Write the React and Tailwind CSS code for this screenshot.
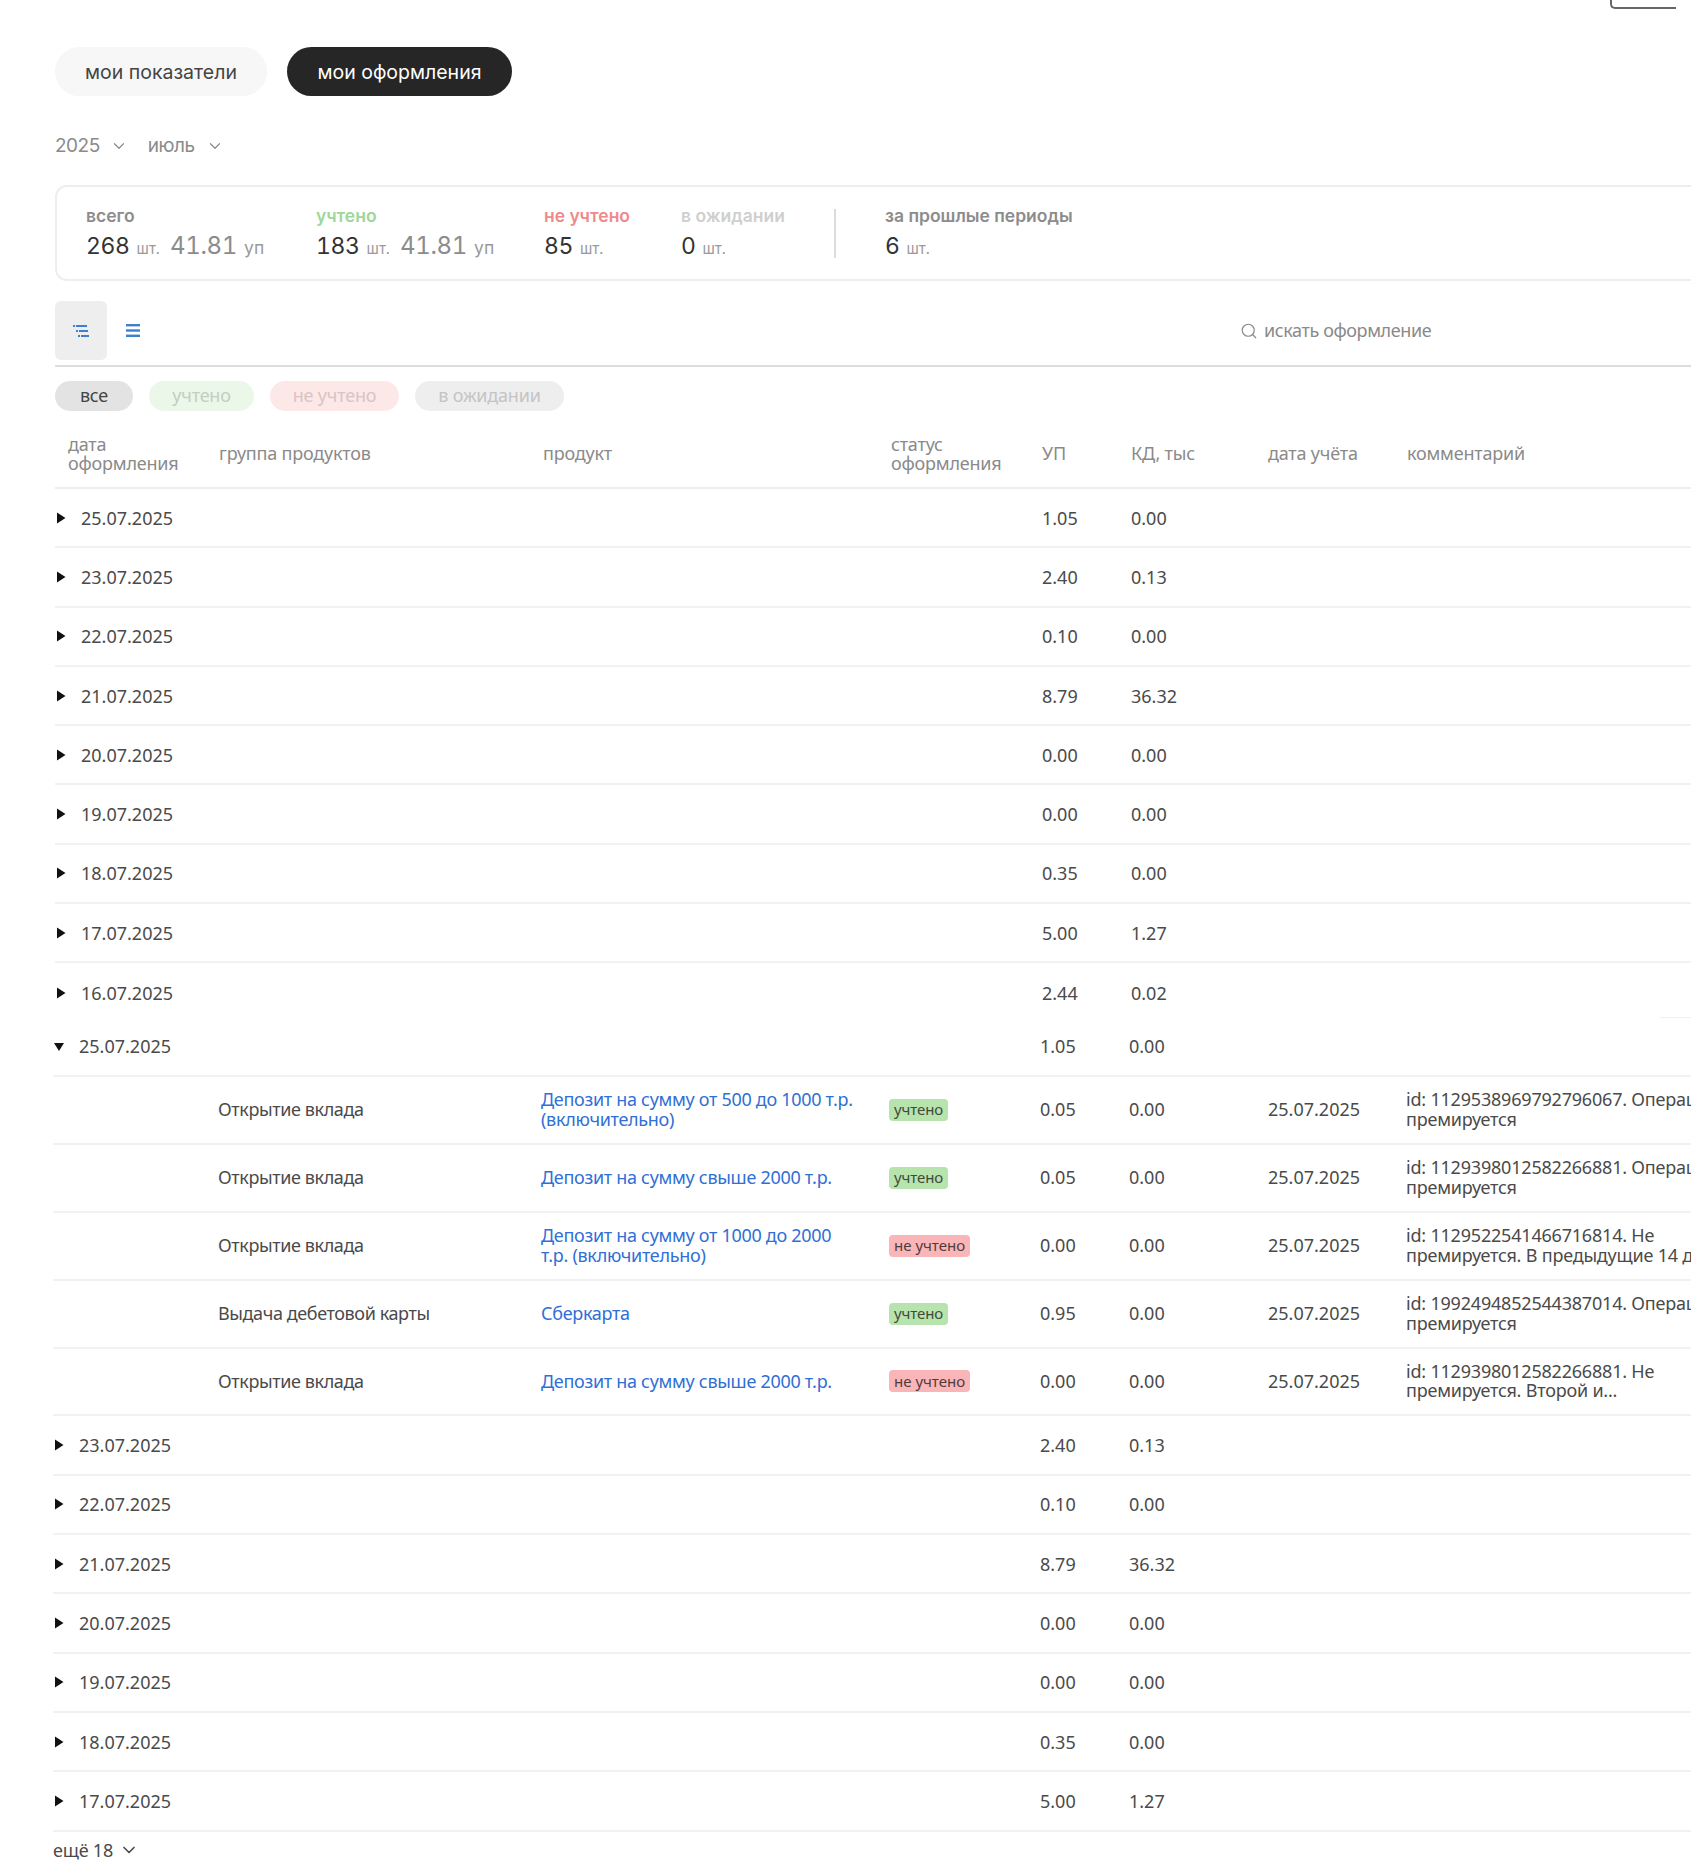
import { Search, ChevronDown } from 'lucide-react'

const top = [
  ['25.07.2025', '1.05', '0.00'],
  ['23.07.2025', '2.40', '0.13'],
  ['22.07.2025', '0.10', '0.00'],
  ['21.07.2025', '8.79', '36.32'],
  ['20.07.2025', '0.00', '0.00'],
  ['19.07.2025', '0.00', '0.00'],
  ['18.07.2025', '0.35', '0.00'],
  ['17.07.2025', '5.00', '1.27'],
  ['16.07.2025', '2.44', '0.02'],
]

const details = [
  {
    group: 'Открытие вклада',
    product: ['Депозит на сумму от 500 до 1000 т.р.', '(включительно)'],
    ok: true,
    up: '0.05',
    comment: ['id: 1129538969792796067. Операция не', 'премируется'],
  },
  {
    group: 'Открытие вклада',
    product: ['Депозит на сумму свыше 2000 т.р.'],
    ok: true,
    up: '0.05',
    comment: ['id: 1129398012582266881. Операция не', 'премируется'],
  },
  {
    group: 'Открытие вклада',
    product: ['Депозит на сумму от 1000 до 2000', 'т.р. (включительно)'],
    ok: false,
    up: '0.00',
    comment: ['id: 1129522541466716814. Не', 'премируется. В предыдущие 14 дней'],
  },
  {
    group: 'Выдача дебетовой карты',
    product: ['Сберкарта'],
    ok: true,
    up: '0.95',
    comment: ['id: 1992494852544387014. Операция не', 'премируется'],
  },
  {
    group: 'Открытие вклада',
    product: ['Депозит на сумму свыше 2000 т.р.'],
    ok: false,
    up: '0.00',
    comment: ['id: 1129398012582266881. Не', 'премируется. Второй и...'],
  },
]

const cols = 'grid grid-cols-[164px_324px_348px_151px_89px_137px_139px_1fr] items-center'

function Caret({ open }) {
  return (
    <svg width="10" height="12" viewBox="0 0 10 12" className="absolute left-[1px] top-1/2 -translate-y-1/2" fill="#111">
      {open ? <path d="M0 3h10L5 11z" /> : <path d="M1 0.5l8.5 5.5L1 11.5z" />}
    </svg>
  )
}

function DateRow({ row, open, last }) {
  return (
    <div className={`${cols} relative h-[59.3px] text-[18px] leading-[20px] text-[#4a4a4a] ${last ? '' : 'border-b-2 border-[#f2f2f2]'}`}>
      <div className="relative pl-[26px]">
        <Caret open={open} />
        {row[0]}
      </div>
      <div />
      <div />
      <div />
      <div>{row[1]}</div>
      <div>{row[2]}</div>
      {last && <div className="absolute bottom-[5px] right-0 h-[1px] w-[31px] bg-[#f0f0f0]" />}
    </div>
  )
}

function DetailRow({ item }) {
  return (
    <div className={`${cols} h-[67.9px] overflow-hidden border-b-2 border-[#f2f2f2] text-[18px] leading-[19.6px] text-[#4a4a4a]`}>
      <div />
      <div className="pl-[1px] tracking-[-0.4px]">{item.group}</div>
      <div className="tracking-[-0.3px] text-[#2f6fd6]">
        {item.product.map((line) => (
          <div key={line}>{line}</div>
        ))}
      </div>
      <div>
        {item.ok ? (
          <span className="inline-flex h-[22px] items-center rounded-[4px] bg-[#b7e3ac] px-[5px] text-[15px] tracking-[-0.1px] text-[#3f4a3d]">учтено</span>
        ) : (
          <span className="inline-flex h-[22px] items-center rounded-[4px] bg-[#f9b5b7] px-[5px] text-[15px] text-[#4f3c3c]">не учтено</span>
        )}
      </div>
      <div>{item.up}</div>
      <div>0.00</div>
      <div className="pl-[2px]">25.07.2025</div>
      <div className="whitespace-nowrap pl-[1px] tracking-[-0.2px]">
        {item.comment.map((line) => (
          <div key={line}>{line}</div>
        ))}
      </div>
    </div>
  )
}

function Stat({ label, labelClass, width, count, up }) {
  return (
    <div className={`${width} shrink-0`}>
      <div className={`text-[17.5px] leading-[22px] font-semibold ${labelClass}`}>{label}</div>
      <div className="mt-[3px] flex items-baseline whitespace-nowrap leading-[32px] tabular-nums">
        <span className="text-[23px] tracking-[-0.4px] text-[#333]">{count}</span>
        <span className="ml-[7px] text-[15px] text-[#9a9a9a]">шт.</span>
        {up && (
          <>
            <span className="ml-[10px] text-[24px] tracking-[-0.3px] text-[#8c8c8c]">{up}</span>
            <span className="ml-[7px] text-[17.5px] text-[#9a9a9a]">уп</span>
          </>
        )}
      </div>
    </div>
  )
}

function Headers() {
  return (
    <div className={`${cols} h-[78px] border-b-2 border-[#eeeeee] pt-[10px] text-[18px] leading-[19.5px] tracking-[-0.2px] text-[#8a8a8a]`}>
      <div className="pl-[13px]">
        дата
        <br />
        оформления
      </div>
      <div>группа продуктов</div>
      <div>продукт</div>
      <div>
        статус
        <br />
        оформления
      </div>
      <div>УП</div>
      <div>КД, тыс</div>
      <div>дата учёта</div>
      <div>комментарий</div>
    </div>
  )
}

export default function App() {
  return (
    <div className="h-[1868px] w-[1691px] overflow-hidden bg-white font-['Noto_Sans',sans-serif]">
      <div className="flex h-[9px] justify-end pr-[15px]">
        <div className="w-[66px] rounded-bl-[5px] border-b-2 border-l-2 border-[#666]" />
      </div>

      <div className="pl-[55px]">
        <div className="mt-[38px] flex gap-[20px] font-['Inter',sans-serif] text-[19.5px]">
          <button className="h-[49px] w-[212px] rounded-full bg-[#f7f7f7] pt-[2px] text-[#444]">мои показатели</button>
          <button className="h-[49px] w-[225px] rounded-full bg-[#262626] pt-[2px] text-white">мои оформления</button>
        </div>

        <div className="mt-[34px] flex h-[30px] items-center pt-[2px] font-['Inter',sans-serif] text-[19px] tracking-[-0.5px] text-[#8a8a8a]">
          <span>2025</span>
          <ChevronDown size={18} strokeWidth={1.6} className="ml-[10px]" />
          <span className="ml-[20px]">июль</span>
          <ChevronDown size={18} strokeWidth={1.6} className="ml-[11px]" />
        </div>

        <div className="mt-[25px] flex h-[96px] items-center rounded-l-[12px] border-y-2 border-l-2 border-[#eeeeee] pl-[29px] pt-[4px] font-['Inter',sans-serif]">
          <Stat label="всего" labelClass="text-[#8c8c8c]" width="w-[230px]" count="268" up="41.81" />
          <Stat label="учтено" labelClass="text-[#9fd69a]" width="w-[228px]" count="183" up="41.81" />
          <Stat label="не учтено" labelClass="text-[#f08a8a]" width="w-[137px]" count="85" />
          <Stat label="в ожидании" labelClass="text-[#cfcfcf]" width="w-[153px]" count="0" />
          <div className="mr-[49px] -mt-[4px] h-[49px] w-[2px] bg-[#dcdcdc]" />
          <Stat label="за прошлые периоды" labelClass="text-[#8c8c8c]" width="w-[260px]" count="6" />
        </div>

        <div className="mt-[20px] flex h-[66px] border-b-2 border-[#dddddd]">
          <div className="flex h-[59px] w-[52px] items-center justify-center rounded-[6px] bg-[#eeeeee]">
            <svg width="18" height="14" viewBox="0 0 18 14" fill="#3f7fd0">
              <rect x="1" y="1" width="2" height="2" />
              <rect x="4" y="1" width="11" height="2" />
              <rect x="4" y="6" width="2" height="2" />
              <rect x="7" y="6" width="9" height="2" />
              <rect x="6" y="11" width="2" height="2" />
              <rect x="9" y="11" width="8" height="2" />
            </svg>
          </div>
          <div className="ml-[19px] flex h-[59px] items-center">
            <svg width="14" height="15" viewBox="0 0 14 15" fill="#3f7fd0">
              <rect x="0" y="1" width="14" height="2.4" />
              <rect x="0" y="6.3" width="14" height="2.4" />
              <rect x="0" y="11.6" width="14" height="2.4" />
            </svg>
          </div>
          <div className="ml-[1100px] flex h-[59px] items-center gap-[6px] text-[18px] tracking-[-0.4px] text-[#8a8a8a]">
            <Search size={18} strokeWidth={1.6} />
            искать оформление
          </div>
        </div>

        <div className="mt-[14px] flex gap-[16px] text-[18px] tracking-[-0.2px]">
          <span className="flex h-[30px] w-[78px] items-center justify-center rounded-full bg-[#e3e3e3] pb-[2px] text-[#444]">все</span>
          <span className="flex h-[30px] w-[105px] items-center justify-center rounded-full bg-[#ebf7e9] pb-[2px] text-[#c3cfc1]">учтено</span>
          <span className="flex h-[30px] w-[129px] items-center justify-center rounded-full bg-[#fde8e8] pb-[2px] text-[#d8c4c4]">не учтено</span>
          <span className="flex h-[30px] w-[149px] items-center justify-center rounded-full bg-[#eeeeee] pb-[2px] text-[#c4c4c4]">в ожидании</span>
        </div>

        <Headers />

        {top.map((row, i) => (
          <DateRow key={row[0]} row={row} last={i === top.length - 1} />
        ))}

        <div className="-mt-[5px] -ml-[2px]">
          <DateRow row={top[0]} open />
          {details.map((item) => (
            <DetailRow key={item.comment[0]} item={item} />
          ))}
          {top.slice(1, 8).map((row) => (
            <DateRow key={row[0]} row={row} />
          ))}
          <div className="mt-[6px] flex items-center gap-[6px] text-[18px] leading-[24px] tracking-[-0.2px] text-[#4a4a4a]">
            ещё 18
            <ChevronDown size={20} strokeWidth={2} />
          </div>
        </div>
      </div>
    </div>
  )
}
